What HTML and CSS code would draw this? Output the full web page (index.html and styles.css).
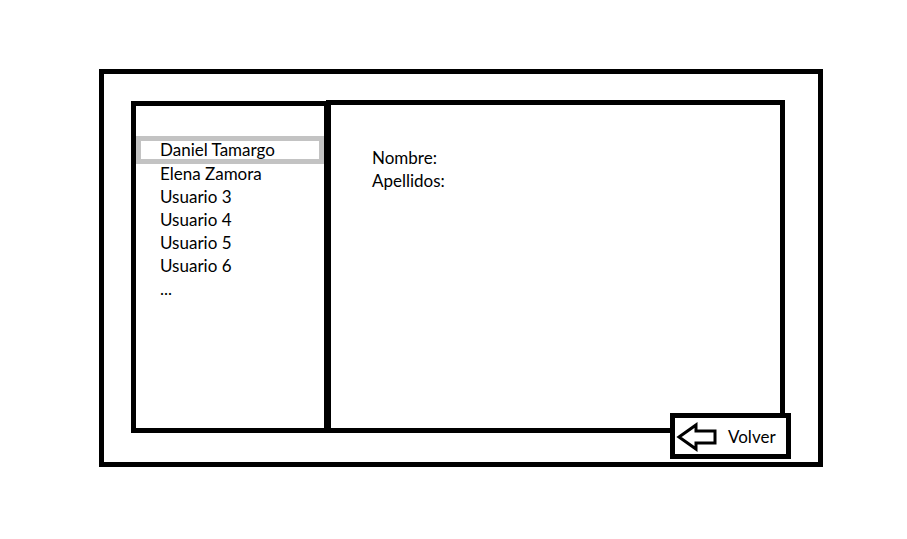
FILE: index.html
```html
<!DOCTYPE html>
<html lang="es">
<head>
  <meta charset="UTF-8">
  <meta name="viewport" content="width=device-width, initial-scale=1.0">
  <title>Usuarios</title>
  <link rel="stylesheet" href="styles.css">
</head>
<body>

  <!-- Marco principal -->
  <div class="frame">

    <!-- Lista de usuarios -->
    <ul class="user-list">
      <li class="user-item selected">Daniel Tamargo</li>
      <li class="user-item">Elena Zamora</li>
      <li class="user-item">Usuario 3</li>
      <li class="user-item">Usuario 4</li>
      <li class="user-item">Usuario 5</li>
      <li class="user-item">Usuario 6</li>
      <li class="user-item">...</li>
    </ul>

    <!-- Detalle del usuario -->
    <div class="detail">
      <div class="field">Nombre:</div>
      <div class="field">Apellidos:</div>

      <div class="back-btn">
        <svg class="back-icon" width="44" height="36" viewBox="0 0 44 36">
          <polygon points="4,19 21,7 21,13 40,13 40,25 21,25 21,31" fill="#fff" stroke="#000" stroke-width="3" stroke-linejoin="miter"/>
        </svg>
        <span>Volver</span>
      </div>
    </div>

  </div>

</body>
</html>
```

FILE: styles.css
```css
body {
  margin: 0;
  padding: 69px 0 0 99px;
  background: #fff;
  font-family: 'Lato', 'Liberation Sans', sans-serif;
  font-size: 17px;
  color: #000;
}

/* Outer frame */
.frame {
  box-sizing: border-box;
  width: 724px;
  height: 398px;
  border: 5px solid #000;
  padding: 27px;
  display: flex;
  align-items: flex-start;
}

/* Left list */
.user-list {
  box-sizing: border-box;
  list-style: none;
  margin: 0;
  padding: 30px 0 0 0;
  width: 198px;
  height: 332px;
  border: 5px solid #000;
  flex-shrink: 0;
}

.user-item {
  padding-left: 24px;
  line-height: 23px;
}

.user-item.selected {
  border: 5px solid #c3c3c3;
  padding-left: 19px;
  line-height: 18px;
  margin-bottom: -2px;
}

/* Right detail panel */
.detail {
  box-sizing: border-box;
  position: relative;
  width: 459px;
  height: 333px;
  margin: -1px 0 0 -3px;
  border: 5px solid #000;
  padding: 41px 0 0 41px;
  flex-shrink: 0;
}

.field {
  line-height: 23px;
}

/* Back button over the corner */
.back-btn {
  box-sizing: border-box;
  position: absolute;
  left: 339px;
  top: 308px;
  width: 121px;
  height: 46px;
  border: 5px solid #000;
  background: #fff;
  display: flex;
  align-items: center;
  gap: 9px;
}

.back-icon {
  display: block;
}
```
